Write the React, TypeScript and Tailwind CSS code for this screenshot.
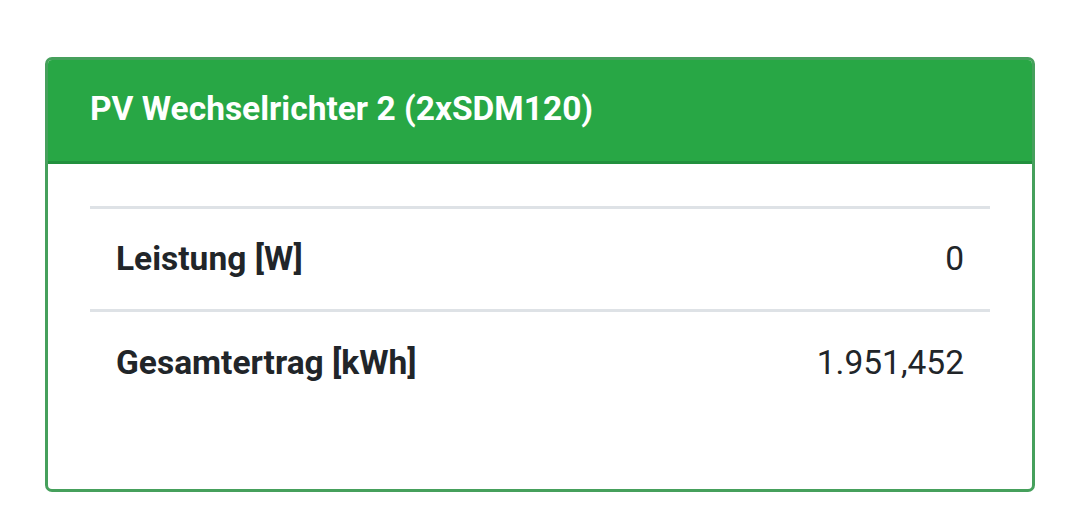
export default function App() {
  return (
    <div className="w-[1080px] h-[507px] bg-white pt-[57px] pl-[45px]" style={{ fontFamily: "Roboto, 'Liberation Sans', sans-serif" }}>
      <div className="w-[990px] h-[435px] border-[3px] border-[#46a05c] rounded-[7px] overflow-hidden flex flex-col">
        <div className="h-[107px] bg-[#28a745] border-b-[3px] border-[#22903e] flex items-center -mt-[3px] -mx-[3px] pl-[45px]">
          <span className="text-white font-bold text-[33.5px] leading-none">PV Wechselrichter 2 (2xSDM120)</span>
        </div>
        <div className="px-[42px] pt-[42px]">
          <div className="border-t-[3px] border-[#dee2e6]">
            <div className="flex justify-between items-center h-[103px] px-[26px] border-b-[3px] border-[#dee2e6] text-[#212529] text-[33.5px]">
              <span className="font-bold">Leistung [W]</span>
              <span>0</span>
            </div>
            <div className="flex justify-between items-center h-[103px] px-[26px] text-[#212529] text-[33.5px]">
              <span className="font-bold">Gesamtertrag [kWh]</span>
              <span>1.951,452</span>
            </div>
          </div>
        </div>
      </div>
    </div>
  );
}
